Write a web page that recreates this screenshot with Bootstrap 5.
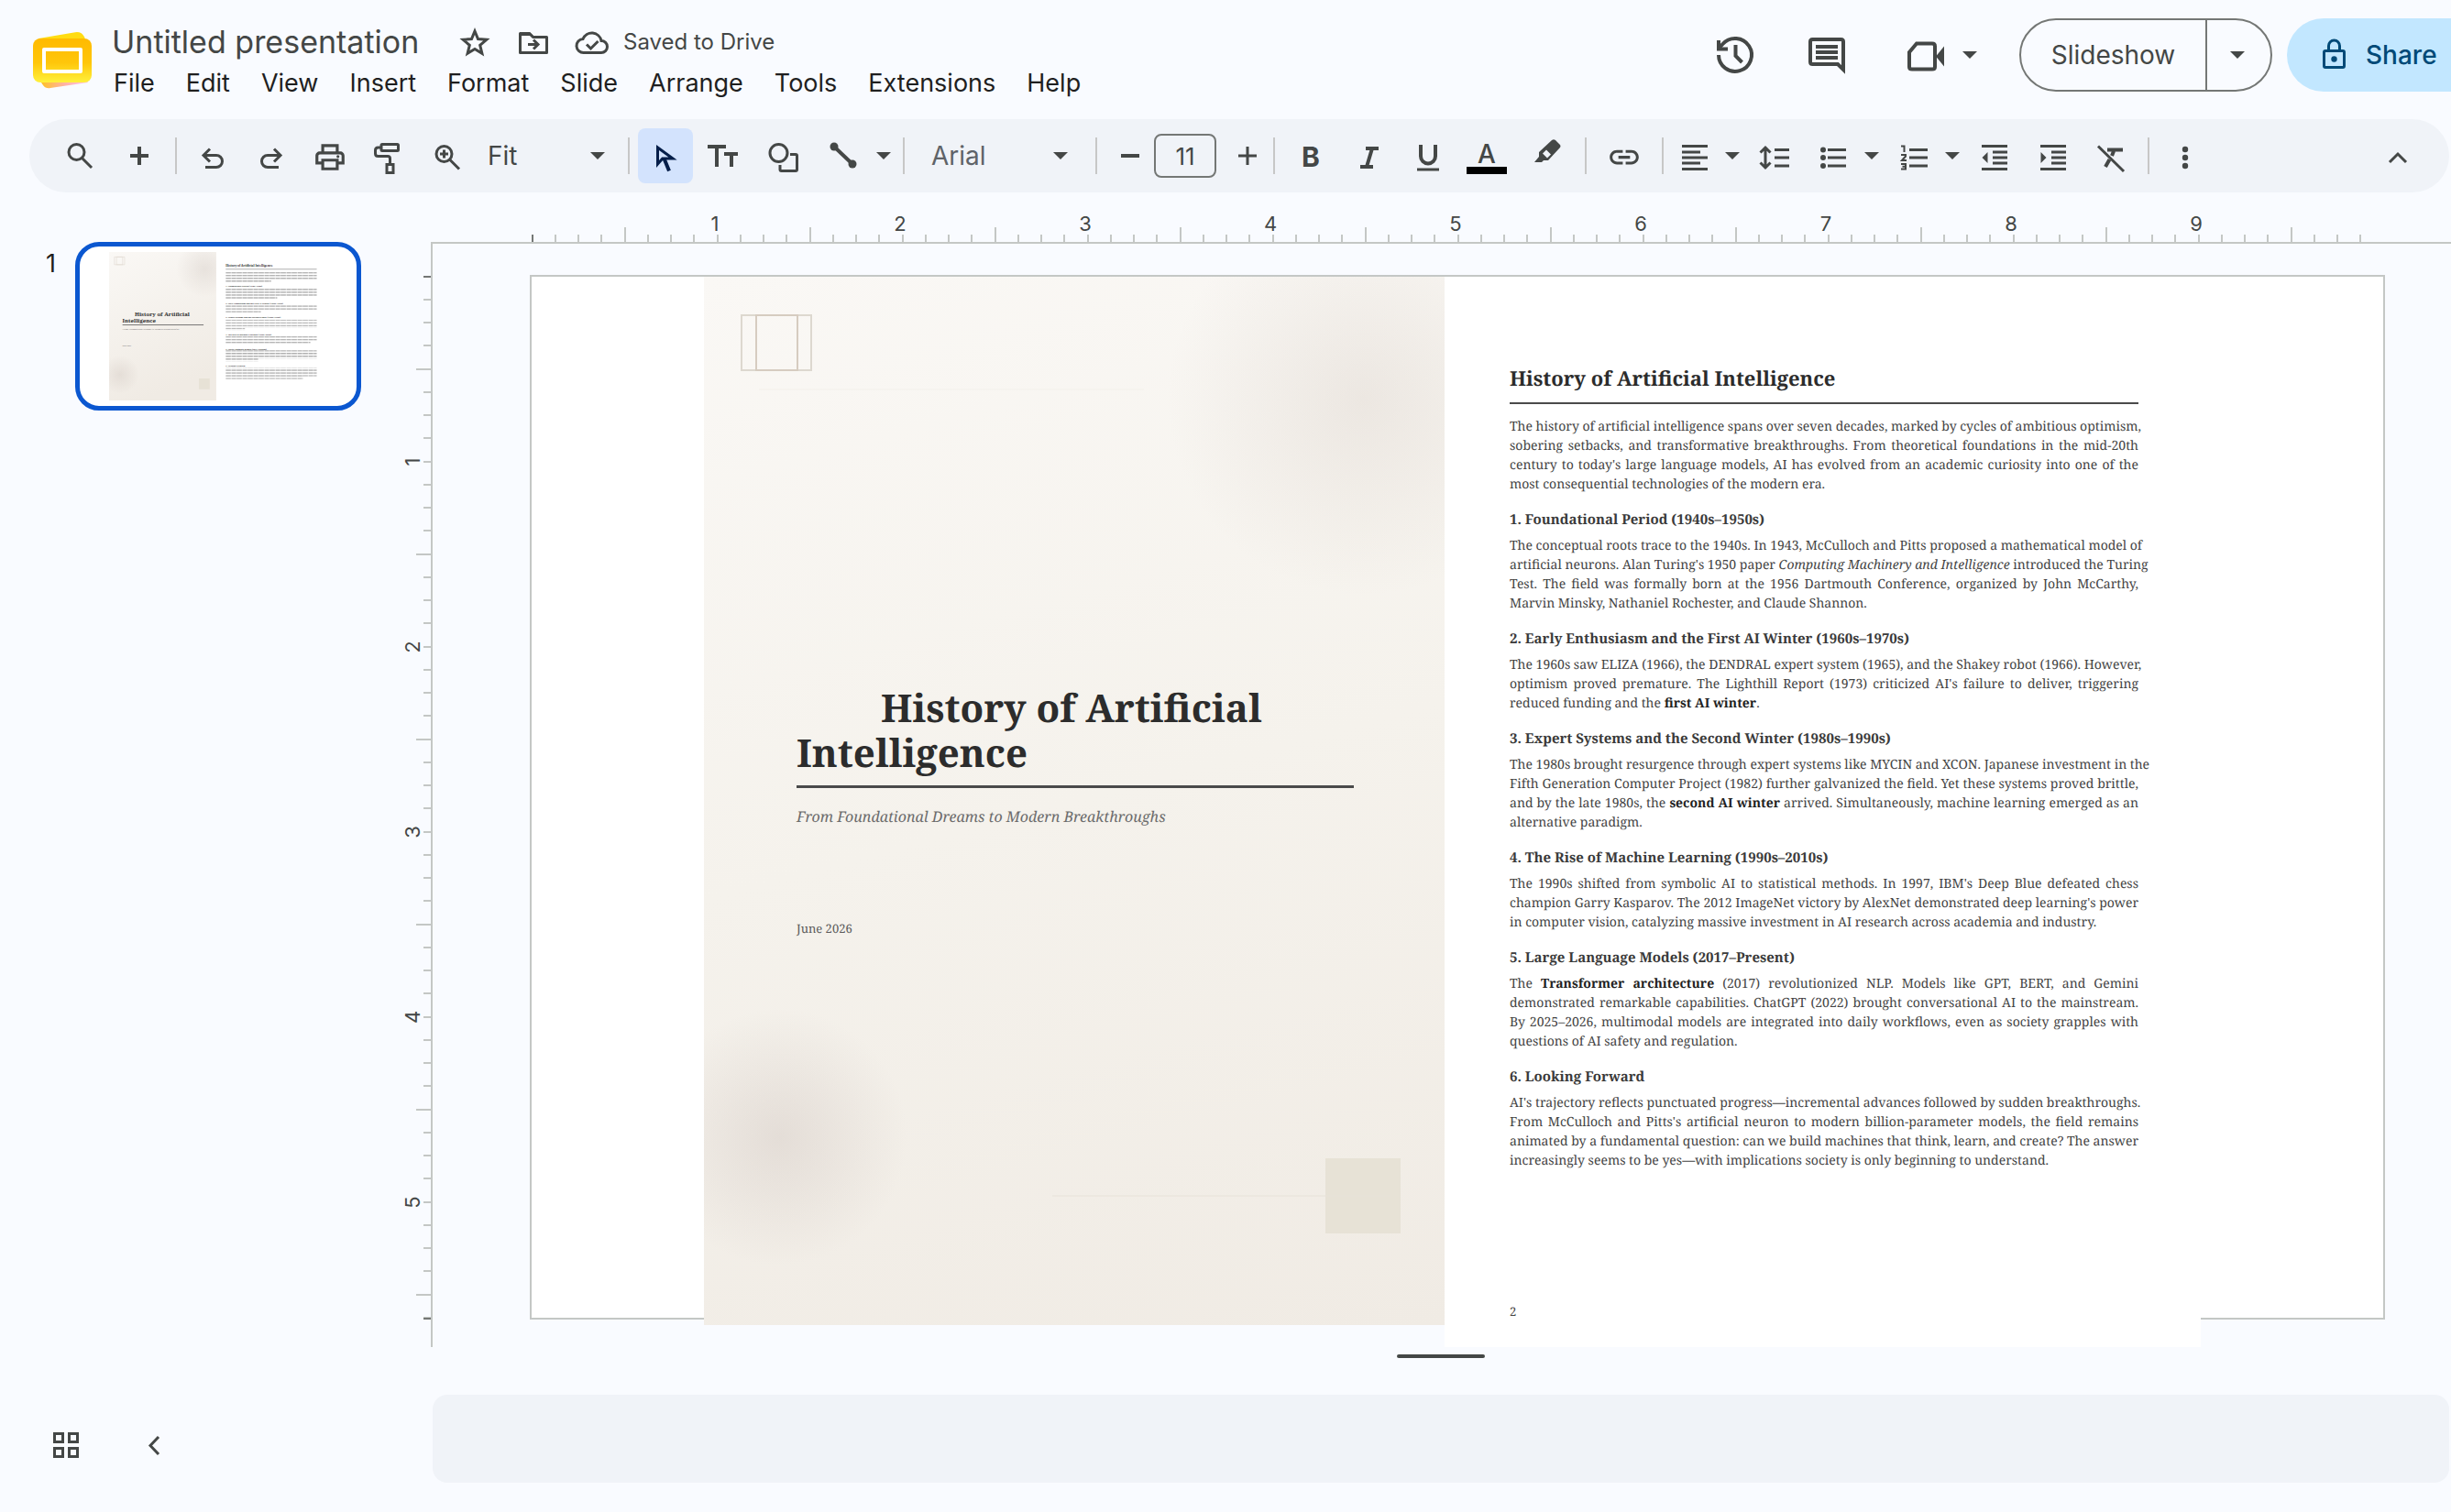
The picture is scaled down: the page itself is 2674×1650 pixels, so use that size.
<!DOCTYPE html>
<html lang="en">
<head>
<meta charset="utf-8">
<meta name="viewport" content="width=device-width, initial-scale=1">
<title>Untitled presentation</title>
<link href="https://cdn.jsdelivr.net/npm/bootstrap@5.3.0/dist/css/bootstrap.min.css" rel="stylesheet">
<style>
  :root { --ink: #444746; --bar: #f0f3f8; --rule: #c4c7c5; }
  body { background: #f9fbff; color: #1f1f1f; font-family: Inter, Roboto, sans-serif; overflow-x: hidden; }
  svg { display: block; flex: none; overflow: visible; }
  svg.line { fill: none; stroke: currentColor; stroke-width: 3; }
  svg.thick { stroke-width: 4; }
  button { border: 0; background: none; color: var(--ink); padding: 0; }
  .solid { fill: currentColor; stroke: none; }

  /* header */
  .top-bar { height: 130px; padding-left: 36px; }
  .app-logo { margin-top: 33px; }
  .doc-block { padding: 24px 0 0 22px; }
  .doc-name { width: 340px; height: 44px; font-size: 34px; line-height: 44px; color: var(--ink); border: 0; background: none; padding: 0; margin-right: 36px; }
  .save-state { font-size: 24px; line-height: 44px; color: var(--ink); margin-left: -10px; }
  .menu-row { gap: 34px; line-height: 44px; font-size: 27px; margin: 1px 0 0 2px; }
  .menu-row a { color: #1f1f1f; text-decoration: none; }
  .head-actions { padding-top: 20px; }
  .head-actions > * { height: 80px; }
  .head-btn { width: 100px; }
  .meet-btn { padding: 0 46px 0 34px; gap: 16px; }
  .pill { border: 2px solid #747775; border-radius: 40px; overflow: hidden; font-size: 28px; font-weight: 500; }
  .pill-main { width: 201px; }
  .pill-drop { width: 71px; border-left: 2px solid #747775; padding-right: 4px; }
  .share-btn { width: 179px; margin-left: 16px; padding-left: 36px; gap: 18px; border-radius: 40px 0 0 40px; background: #c2e7ff; color: #004a77; font-size: 28px; font-weight: 500; }

  /* toolbar */
  .tool-bar { height: 80px; margin: 0 2px 0 32px; padding: 0 24px; border-radius: 40px; background: var(--bar); color: var(--ink); }
  .tool { width: 64px; height: 60px; flex: none; display: flex; align-items: center; justify-content: center; }
  .tool.on { width: 60px; margin: 0 2px; border-radius: 8px; background: #d3e3fd; color: #041e49; }
  .split { width: 60px; }
  .narrow { width: 54px; }
  .drop { width: 28px; }
  .wide { width: 68px; }
  .stepper { width: 55px; }
  .sep { width: 16px; height: 40px; flex: none; background: linear-gradient(#c7c7c7, #c7c7c7) center / 2px 40px no-repeat; }
  .pick { height: 60px; border: 0; padding: 0 0 0 14px; font-size: 28px; color: var(--ink); background-color: transparent; background-size: 16px 8px; background-position: right 18px center;
    background-image: url("data:image/svg+xml,%3Csvg xmlns='http://www.w3.org/2000/svg' viewBox='0 0 16 8'%3E%3Cpath fill='%23444746' d='M0 0h16L8 8z'/%3E%3C/svg%3E"); }
  .pick-zoom { width: 158px; padding-left: 12px; }
  .pick-font { width: 194px; padding-left: 22px; background-position: right 23px center; color: #5f6368; }
  .size-box { width: 68px; height: 48px; border: 2px solid #747775; border-radius: 8px; background: none; text-align: center; font-size: 26px; color: var(--ink); padding: 0; }

  /* filmstrip */
  .work-row { margin-top: 16px; }
  .film { width: 440px; padding: 38px 0 0 50px; flex: none; font-size: 27px; }
  .film-num { width: 32px; line-height: 48px; }
  .thumb { width: 312px; height: 184px; border: 5px solid #0b57d0; border-radius: 26px; overflow: hidden; background: #fff; }

  /* rulers and canvas */
  .ruler { color: var(--ink); font-size: 22px; }
  .h-ruler { margin-left: 30px; height: 40px; border-bottom: 2px solid var(--rule); }
  .v-ruler { width: 32px; height: 1204px; border-right: 2px solid var(--rule); flex: none; }
  .stage { height: 1204px; padding: 34px 72px 0 106px; overflow: hidden; }
  .slide { height: 1140px; border: 2px solid var(--rule); background: #fff; padding-left: 188px; }
  .doc-page { font-family: "Noto Serif", "DejaVu Serif Condensed", serif; font-size: 14px; line-height: 21px; color: #444; flex: none; text-rendering: geometricPrecision; }
  .cover { width: 808px; height: 1144px; padding: 446px 99px 0 101px; position: relative;
    background:
      radial-gradient(circle 215px at 720px 133px, rgba(190,175,165,.2), rgba(190,175,165,0)),
      radial-gradient(circle 140px at 82px 939px, rgba(185,170,165,.26), rgba(185,170,165,0)),
      linear-gradient(165deg, #faf8f5, #f5f2ec 50%, #f0ebe4); }
  .cover-art { position: absolute; left: 0; top: 0; }
  .cover-title { font-size: 42px; line-height: 49px; font-weight: 700; color: #2c2c2c; text-indent: 92px; margin: 0; padding-bottom: 11px; border-bottom: 3px solid #4a4a4a; }
  .cover-sub { font-size: 16px; line-height: 26px; font-style: italic; color: #6b6b6b; margin: 18px 0 99px; }
  .cover-date { font-size: 13px; color: #5a5a5a; margin: 0; }
  .article { width: 825px; height: 1168px; padding: 94px 68px 30px 71px; background: #fff; }
  .article h1 { font-size: 22px; line-height: 34px; font-weight: 700; color: #2c2c2c; margin: 0 0 14px; padding-bottom: 9px; border-bottom: 2px solid #4a4a4a; }
  .article h2 { font-size: 15px; line-height: 22px; font-weight: 700; color: #3a3a3a; margin: 17px 0 7px; }
  .article p { margin: 0; }
  .article p span { display: block; white-space: nowrap; text-align: justify; text-align-last: justify; }
  .article p span:last-child { text-align-last: left; }
  .article strong { color: #222; }
  .folio { font-size: 13px; line-height: 18px; }

  /* notes */
  .grip { width: 96px; height: 4px; border-radius: 2px; background: var(--ink); margin: 8px auto 40px; }
  .notes { height: 96px; border: 0; border-radius: 16px; background: var(--bar); resize: none; }
  .foot-row { padding: 0 2px 32px 0; }
  .foot-tools { width: 472px; flex: none; padding-left: 24px; }
  .foot-tools button { width: 96px; height: 82px; }
</style>
<script src="https://cdn.jsdelivr.net/npm/bootstrap@5.3.0/dist/js/bootstrap.bundle.min.js"></script>
</head>
<body>

<header class="top-bar d-flex align-items-start">
  <svg class="app-logo" width="64" height="66" viewBox="0 0 64 66" aria-label="Slides">
    <defs>
      <linearGradient id="lgA" x1="0" y1="0" x2="0" y2="1"><stop offset="0" stop-color="#ffba00"/><stop offset=".55" stop-color="#ffc60a"/><stop offset="1" stop-color="#fff13c"/></linearGradient>
      <linearGradient id="lgB" x1="0" y1="0" x2="1" y2="0"><stop offset="0" stop-color="#ffc21a"/><stop offset=".5" stop-color="#ffb3a0"/><stop offset="1" stop-color="#ffc0ee"/></linearGradient>
    </defs>
    <path d="M6 9 46 2.200q7-1 10 5l2 5H6z" fill="#ffdc12"/>
    <path d="M7 54l4 6q3 4 8 3l41-6-3-6z" fill="url(#lgB)"/>
    <rect y="9" width="64" height="48" rx="8" fill="url(#lgA)"/>
    <rect x="12" y="21" width="40" height="24" fill="none" stroke="#fff" stroke-width="4" stroke-linejoin="round"/>
  </svg>
  <div class="doc-block">
    <div class="d-flex align-items-center">
      <input class="doc-name" type="text" value="Untitled presentation" aria-label="Rename">
      <div class="d-flex gap-4">
        <button aria-label="Star"><svg class="line" width="40" height="40" viewBox="0 0 40 40"><path d="M20 8l3.500 8.600 9.300.7-7.100 6 2.200 9-7.900-4.900-7.900 4.900 2.200-9-7.100-6 9.300-.7z"/></svg></button>
        <button aria-label="Move"><svg class="line" width="40" height="40" viewBox="0 0 40 40"><path d="M5.500 10.500h10l4 4h15v17h-29z" stroke-linejoin="round"/><path d="M5 9h11l4 4H5z" class="solid"/><path d="M14 22.500h10M20 17.500l5 5-5 5"/></svg></button>
        <button aria-label="Document status"><svg class="line" width="40" height="40" viewBox="0 0 40 40"><path d="M11 31.500a7.500 7.500 0 0 1-1-15 10.500 10.500 0 0 1 20 2 6.500 6.500 0 0 1 0 13z"/><path d="M14 22.500l4.500 4.500 8-8"/></svg></button>
        <span class="save-state">Saved to Drive</span>
      </div>
    </div>
    <nav class="menu-row d-flex">
      <a href="#">File</a><a href="#">Edit</a><a href="#">View</a><a href="#">Insert</a><a href="#">Format</a><a href="#">Slide</a><a href="#">Arrange</a><a href="#">Tools</a><a href="#">Extensions</a><a href="#">Help</a>
    </nav>
  </div>
  <div class="head-actions d-flex ms-auto">
    <button class="head-btn d-flex align-items-center justify-content-center" aria-label="Version history"><svg class="line thick" width="40" height="40" viewBox="0 0 40 40"><path d="M2 20a18 18 0 1 0 4.500-12L2 13"/><path d="M2 4v9.500h10M20.500 9v12l7 7"/></svg></button>
    <button class="head-btn d-flex align-items-center justify-content-center" aria-label="Comments"><svg class="line thick" width="40" height="40" viewBox="0 0 40 40"><path d="M2 5.500Q2 3 4.500 3h31Q38 3 38 5.500V36l-6-6H4.500Q2 30 2 27.500z"/><path d="M8 11h24M8 17h24M8 23h24"/></svg></button>
    <button class="meet-btn d-flex align-items-center" aria-label="Meet">
      <svg class="line thick" width="48" height="48" viewBox="0 0 48 48"><path d="M6 21l8-9.500h17q3 0 3 3V37q0 2.500-3 2.500H9Q6 39.500 6 37z"/><path class="solid" d="M35 25.500l9-11v22z"/></svg>
      <svg width="16" height="8" viewBox="0 0 16 8"><path class="solid" d="M0 0h16L8 8z"/></svg>
    </button>
    <div class="pill d-flex">
      <button class="pill-main">Slideshow</button>
      <button class="pill-drop d-flex align-items-center justify-content-center" aria-label="Slideshow options"><svg width="16" height="8" viewBox="0 0 16 8"><path class="solid" d="M0 0h16L8 8z"/></svg></button>
    </div>
    <button class="share-btn d-flex align-items-center">
      <svg width="32" height="36" viewBox="0 0 32 36" fill="none" stroke="currentColor" stroke-width="3"><rect x="4.500" y="13.500" width="22" height="18" rx="1.500"/><path d="M9.500 13V8a6 6 0 0 1 12 0v5"/><circle class="solid" cx="15.500" cy="22.500" r="3.200"/></svg>
      <span>Share</span>
    </button>
  </div>
</header>

<div class="tool-bar d-flex align-items-center" role="toolbar">
  <button class="tool" aria-label="Search the menus"><svg class="line" width="40" height="40"><circle cx="15.500" cy="16" r="8.500"/><path d="M21.500 22.500L32 33"/></svg></button>
  <button class="tool" aria-label="New slide"><svg class="line thick" width="40" height="40"><path d="M20 10v20M10 20h20"/></svg></button>
  <span class="sep"></span>
  <button class="tool" aria-label="Undo"><svg class="line" width="40" height="40"><path d="M17 12.500l-7 7 7 7M10 19.500h14a6.500 6.500 0 0 1 0 13H12"/></svg></button>
  <button class="tool" aria-label="Redo"><svg class="line" width="40" height="40"><path d="M23 12.500l7 7-7 7M30 19.500H16a6.500 6.500 0 0 0 0 13h12"/></svg></button>
  <button class="tool" aria-label="Print"><svg width="38" height="38" viewBox="0 -1 24 24"><path class="solid" fill-rule="evenodd" d="M19 8h-1V3H6v5H5c-1.660 0-3 1.340-3 3v6h4v4h12v-4h4v-6c0-1.660-1.340-3-3-3zM8 5h8v3H8V5zm8 12v2H8v-4h8v2zm2-2v-2H6v2H4v-4c0-.55.45-1 1-1h14c.55 0 1 .45 1 1v4h-2z"/><circle class="solid" cx="17.500" cy="11.500" r="1"/></svg></button>
  <button class="tool" aria-label="Paint format"><svg class="line" width="40" height="40"><rect x="12" y="7.500" width="18.500" height="7" rx="1"/><path d="M12 11H8.500Q5.500 11 5.500 14v3.500q0 3 3 3H19q2.500 0 2.500 2.500v6"/><rect x="18" y="29.500" width="7" height="9"/></svg></button>
  <button class="tool" aria-label="Zoom"><svg class="line" width="40" height="40"><circle cx="16.500" cy="18" r="8.500"/><path d="M22.500 24L33 34.500M16.500 13.500v9M12 18h9"/></svg></button>
  <select class="form-select pick pick-zoom" aria-label="Zoom level"><option>Fit</option><option>100%</option></select>
  <span class="sep"></span>
  <button class="tool on" aria-label="Select"><svg class="line" width="40" height="40"><path d="M11.500 11v18l5.300-6H28z"/><path d="M18.500 23L24 36.500" style="stroke-width:4"/></svg></button>
  <button class="tool" aria-label="Text box"><svg class="line thick" width="40" height="40"><path d="M2 10h20M12 10v22M20 18h15M28 18v14"/></svg></button>
  <button class="tool" aria-label="Shape"><svg class="line" width="40" height="40"><circle cx="15.500" cy="17" r="9.500"/><path d="M28 18.500h6q1.500 0 1.500 1.500v15q0 1.500-1.500 1.500H18.500q-1.500 0-1.500-1.500v-5"/></svg></button>
  <button class="tool" aria-label="Line"><svg class="line thick" width="40" height="40"><path d="M12 10l20 19"/><circle class="solid" cx="12" cy="10" r="4.500"/><circle class="solid" cx="32" cy="29" r="4.500"/></svg></button>
  <button class="tool drop" aria-label="Line options"><svg width="16" height="8" viewBox="0 0 16 8"><path class="solid" d="M0 0h16L8 8z"/></svg></button>
  <span class="sep"></span>
  <select class="form-select pick pick-font" aria-label="Font"><option>Arial</option><option>Georgia</option></select>
  <span class="sep"></span>
  <button class="tool stepper" aria-label="Decrease font size"><svg class="line thick" width="40" height="40"><path d="M11 20h20"/></svg></button>
  <input class="size-box" type="text" value="11" aria-label="Font size">
  <button class="tool stepper" aria-label="Increase font size"><svg class="line" width="40" height="40"><path d="M16 20h20M26 10v20"/></svg></button>
  <span class="sep"></span>
  <button class="tool" aria-label="Bold"><svg width="40" height="40"><text x="20" y="32" text-anchor="middle" font-size="30" font-weight="700" fill="currentColor">B</text></svg></button>
  <button class="tool" aria-label="Italic"><svg class="line thick" width="40" height="40"><path d="M16 12h14M10 32h14M23 12l-6 20"/></svg></button>
  <button class="tool" aria-label="Underline"><svg class="line" width="40" height="40"><path d="M12 8v12.500a8 8 0 0 0 16 0V8" style="stroke-width:4"/><path d="M8 35h24"/></svg></button>
  <button class="tool" aria-label="Text color"><svg width="40" height="40"><text x="20" y="28" text-anchor="middle" font-size="28" font-weight="500" fill="currentColor">A</text><path d="M-2 32h44v8H-2z" fill="#000"/></svg></button>
  <button class="tool wide" aria-label="Highlight color"><svg width="40" height="40"><path class="solid" fill-rule="evenodd" d="M6 27l5-6v-5L25 3q2-1.500 4 0l4.500 4.500q2 2 0 4L21 25h-5l-2 2zM15 17.500L20 22.500l4-4L19 13.500z"/></svg></button>
  <span class="sep"></span>
  <button class="tool wide" aria-label="Insert link"><svg width="38" height="38" viewBox="0 -1 24 24"><path class="solid" d="M3.900 12c0-1.710 1.390-3.100 3.100-3.100h4V7H7c-2.760 0-5 2.240-5 5s2.240 5 5 5h4v-1.900H7c-1.710 0-3.100-1.390-3.100-3.100zM8 13h8v-2H8v2zm9-6h-4v1.900h4c1.710 0 3.100 1.390 3.100 3.100s-1.390 3.100-3.100 3.100h-4V17h4c2.760 0 5-2.240 5-5s-2.240-5-5-5z"/></svg></button>
  <span class="sep"></span>
  <button class="tool narrow" aria-label="Align"><svg class="line" width="40" height="40"><path d="M6 9.500h28M6 16h20M6 22h28M6 28h20M6 34.500h28"/></svg></button>
  <button class="tool drop" aria-label="Align options"><svg width="16" height="8" viewBox="0 0 16 8"><path class="solid" d="M0 0h16L8 8z"/></svg></button>
  <button class="tool" aria-label="Line spacing"><svg class="line" width="40" height="40"><path d="M20 13.500h16M20 22h16M20 31h16M10 12v20M4.500 16.500l5.500-5.500 5.500 5.500M4.500 27.500L10 33l5.500-5.500"/></svg></button>
  <button class="tool split" aria-label="Bulleted list"><svg class="line" width="40" height="40"><path d="M16 13.500h20M16 22h20M16 31h20"/><g class="solid"><circle cx="11" cy="13.500" r="3"/><circle cx="11" cy="22" r="3"/><circle cx="11" cy="31" r="3"/></g></svg></button>
  <button class="tool drop" aria-label="Bulleted list options"><svg width="16" height="8" viewBox="0 0 16 8"><path class="solid" d="M0 0h16L8 8z"/></svg></button>
  <button class="tool split" aria-label="Numbered list"><svg class="line" width="40" height="40"><path d="M17 13.500h20M17 22h20M17 31h20"/><path d="M8 9.500h3.500V16M8 19h5v1.500L9 25h5M8 29h5v5.500H8M9.500 31.700H13" style="stroke-width:2"/></svg></button>
  <button class="tool drop" aria-label="Numbered list options"><svg width="16" height="8" viewBox="0 0 16 8"><path class="solid" d="M0 0h16L8 8z"/></svg></button>
  <button class="tool" aria-label="Decrease indent"><svg class="line" width="40" height="40"><path d="M6 9.500h28M18 16h16M18 22h16M18 28h16M6 34.500h28"/><path class="solid" d="M12.500 16v12L6.500 22z"/></svg></button>
  <button class="tool" aria-label="Increase indent"><svg class="line" width="40" height="40"><path d="M6 9.500h28M18 16h16M18 22h16M18 28h16M6 34.500h28"/><path class="solid" d="M6.500 16v12l6-6z"/></svg></button>
  <button class="tool" aria-label="Clear formatting"><svg class="line" width="40" height="40"><path d="M5 9.500L33 37"/><path d="M15 13.500h17M22 15l-2 5M17.500 24L13 32" style="stroke-width:4"/></svg></button>
  <span class="sep"></span>
  <button class="tool" aria-label="More"><svg width="40" height="40"><g class="solid"><circle cx="20" cy="13" r="3.200"/><circle cx="20" cy="22" r="3.200"/><circle cx="20" cy="31" r="3.200"/></g></svg></button>
  <button class="tool ms-auto" aria-label="Hide the menus"><svg class="line" width="40" height="40"><path d="M11 27l9-9 9 9"/></svg></button>
</div>

<main class="work-row d-flex">
  <aside class="film d-flex align-items-start">
    <span class="film-num">1</span>
    <div class="thumb">
      <svg width="302" height="174" viewBox="0 0 2086 1202" font-family="Noto Serif, serif" aria-label="Slide 1">
        <defs>
          <linearGradient id="pg" x1="0" y1="0" x2=".3" y2="1"><stop offset="0" stop-color="#faf8f5"/><stop offset="1" stop-color="#f0ebe4"/></linearGradient>
          <radialGradient id="bl"><stop offset="0" stop-color="#bdb0a8" stop-opacity=".26"/><stop offset="1" stop-color="#bdb0a8" stop-opacity="0"/></radialGradient>
          <pattern id="ln" width="83" height="21" patternUnits="userSpaceOnUse"><path d="M0 10h38M42 10h38" stroke="#444" stroke-width="10" opacity=".42"/></pattern>
          <clipPath id="cp"><path d="M0 0h808v1120H0z"/></clipPath>
        </defs>
        <g transform="translate(221 41)">
          <g clip-path="url(#cp)"><path d="M0 0h808v1120H0z" fill="url(#pg)"/><circle cx="720" cy="125" r="215" fill="url(#bl)"/><circle cx="82" cy="925" r="145" fill="url(#bl)"/>
          <path d="M40 38h77v58H40zM56 38h46v58H56z" fill="none" stroke="#e0d9d0" stroke-width="4"/><path d="M677 953h82v82h-82z" fill="#e7e2d6"/></g>
          <g fill="#2c2c2c" font-weight="700" font-size="42"><text x="193" y="482">History of Artificial</text><text x="101" y="531">Intelligence</text></g>
          <path d="M101 550h611" stroke="#4a4a4a" stroke-width="5"/>
          <text x="101" y="588" font-size="17" font-style="italic" fill="#6b6b6b">From Foundational Dreams to Modern Breakthroughs</text>
          <text x="101" y="709" font-size="14" fill="#5a5a5a">June 2026</text>
          <g transform="translate(879 0)" fill="#2c2c2c" font-weight="700" font-size="15">
            <text y="111" font-size="22">History of Artificial Intelligence</text><path d="M0 130h686" stroke="#777" stroke-width="4"/>
            <g fill="url(#ln)"><path d="M0 147h686v63H0zM0 210h342v21H0z"/><path d="M0 273h686v63H0zM0 336h388v21H0z"/><path d="M0 399h686v42H0zM0 441h265v21H0z"/><path d="M0 510h686v63H0zM0 573h145v21H0z"/><path d="M0 636h686v42H0zM0 678h638v21H0z"/><path d="M0 741h686v63H0zM0 804h246v21H0z"/><path d="M0 875h686v63H0zM0 938h582v21H0z"/></g>
            <text y="262">1. Foundational Period (1940s–1950s)</text><text y="392">2. Early Enthusiasm and the First AI Winter (1960s–1970s)</text><text y="501">3. Expert Systems and the Second Winter (1980s–1990s)</text><text y="630">4. The Rise of Machine Learning (1990s–2010s)</text><text y="738">5. Large Language Models (2017–Present)</text><text y="866">6. Looking Forward</text>
          </g>
        </g>
      </svg>
    </div>
  </aside>

  <section class="flex-grow-1">
    <div class="ruler h-ruler">
      <svg width="100%" height="38">
        <defs><pattern id="hr" x="110" width="202" height="38" patternUnits="userSpaceOnUse"><path d="M1 30v8M26 30v8M51 30v8M76 30v8M102 22v16M127 30v8M152 30v8M177 30v8" stroke="#c4c7c5" stroke-width="2" shape-rendering="crispEdges"/></pattern></defs>
        <rect x="110" width="1998" height="38" fill="url(#hr)"/>
        <path d="M111 30v8" stroke="#747775" stroke-width="2"/>
        <g text-anchor="middle" fill="currentColor"><text x="310" y="26">1</text><text x="512" y="26">2</text><text x="714" y="26">3</text><text x="916" y="26">4</text><text x="1118" y="26">5</text><text x="1320" y="26">6</text><text x="1522" y="26">7</text><text x="1724" y="26">8</text><text x="1926" y="26">9</text></g>
      </svg>
    </div>
    <div class="d-flex">
      <div class="ruler v-ruler">
        <svg width="30" height="1204">
          <defs><pattern id="vr" y="35" width="30" height="202" patternUnits="userSpaceOnUse"><path d="M22 1h8M22 26h8M22 51h8M22 76h8M14 102h16M22 127h8M22 152h8M22 177h8" stroke="#c4c7c5" stroke-width="2" shape-rendering="crispEdges"/></pattern></defs>
          <rect y="35" width="30" height="1138" fill="url(#vr)"/>
          <path d="M22 36h8M22 1173h8" stroke="#747775" stroke-width="2"/>
          <g text-anchor="middle" fill="currentColor"><text transform="translate(18 238) rotate(-90)">1</text><text transform="translate(18 440) rotate(-90)">2</text><text transform="translate(18 642) rotate(-90)">3</text><text transform="translate(18 844) rotate(-90)">4</text><text transform="translate(18 1046) rotate(-90)">5</text></g>
        </svg>
      </div>
      <div class="stage flex-grow-1">
        <div class="slide d-flex align-items-start">
          <article class="doc-page cover">
            <svg class="cover-art" width="808" height="1144"><g fill="none" stroke-width="2"><path d="M41 42h76v60H41z" stroke="#ddd8cf"/><path d="M57 42h45v60H57z" stroke="#d6ccc0"/></g><path d="M60 123h420" stroke="#f3f0eb"/><path d="M678 962h82v82h-82z" fill="#e7e2d6"/><path d="M380 1003h369" stroke="#e7e2d8"/></svg>
            <h1 class="cover-title">History of Artificial Intelligence</h1>
            <p class="cover-sub">From Foundational Dreams to Modern Breakthroughs</p>
            <p class="cover-date">June 2026</p>
          </article>
          <article class="doc-page article d-flex flex-column">
            <h1>History of Artificial Intelligence</h1>
            <p><span>The history of artificial intelligence spans over seven decades, marked by cycles of ambitious optimism,</span>
              <span>sobering setbacks, and transformative breakthroughs. From theoretical foundations in the mid-20th</span>
              <span>century to today's large language models, AI has evolved from an academic curiosity into one of the</span>
              <span>most consequential technologies of the modern era.</span></p>
            <h2>1. Foundational Period (1940s–1950s)</h2>
            <p><span>The conceptual roots trace to the 1940s. In 1943, McCulloch and Pitts proposed a mathematical model of</span>
              <span>artificial neurons. Alan Turing's 1950 paper <em>Computing Machinery and Intelligence</em> introduced the Turing</span>
              <span>Test. The field was formally born at the 1956 Dartmouth Conference, organized by John McCarthy,</span>
              <span>Marvin Minsky, Nathaniel Rochester, and Claude Shannon.</span></p>
            <h2>2. Early Enthusiasm and the First AI Winter (1960s–1970s)</h2>
            <p><span>The 1960s saw ELIZA (1966), the DENDRAL expert system (1965), and the Shakey robot (1966). However,</span>
              <span>optimism proved premature. The Lighthill Report (1973) criticized AI's failure to deliver, triggering</span>
              <span>reduced funding and the <strong>first AI winter</strong>.</span></p>
            <h2>3. Expert Systems and the Second Winter (1980s–1990s)</h2>
            <p><span>The 1980s brought resurgence through expert systems like MYCIN and XCON. Japanese investment in the</span>
              <span>Fifth Generation Computer Project (1982) further galvanized the field. Yet these systems proved brittle,</span>
              <span>and by the late 1980s, the <strong>second AI winter</strong> arrived. Simultaneously, machine learning emerged as an</span>
              <span>alternative paradigm.</span></p>
            <h2>4. The Rise of Machine Learning (1990s–2010s)</h2>
            <p><span>The 1990s shifted from symbolic AI to statistical methods. In 1997, IBM's Deep Blue defeated chess</span>
              <span>champion Garry Kasparov. The 2012 ImageNet victory by AlexNet demonstrated deep learning's power</span>
              <span>in computer vision, catalyzing massive investment in AI research across academia and industry.</span></p>
            <h2>5. Large Language Models (2017–Present)</h2>
            <p><span>The <strong>Transformer architecture</strong> (2017) revolutionized NLP. Models like GPT, BERT, and Gemini</span>
              <span>demonstrated remarkable capabilities. ChatGPT (2022) brought conversational AI to the mainstream.</span>
              <span>By 2025–2026, multimodal models are integrated into daily workflows, even as society grapples with</span>
              <span>questions of AI safety and regulation.</span></p>
            <h2>6. Looking Forward</h2>
            <p><span>AI's trajectory reflects punctuated progress—incremental advances followed by sudden breakthroughs.</span>
              <span>From McCulloch and Pitts's artificial neuron to modern billion-parameter models, the field remains</span>
              <span>animated by a fundamental question: can we build machines that think, learn, and create? The answer</span>
              <span>increasingly seems to be yes—with implications society is only beginning to understand.</span></p>
            <div class="folio mt-auto">2</div>
          </article>
        </div>
      </div>
    </div>
  </section>
</main>

<footer class="foot-row d-flex align-items-end">
  <div class="foot-tools d-flex">
    <button class="d-flex align-items-center justify-content-center" aria-label="Grid view"><svg width="28" height="28" viewBox="0 0 28 28" fill="none" stroke="currentColor" stroke-width="3"><path d="M1.500 1.500h9v9h-9zM17.500 1.500h9v9h-9zM1.500 17.500h9v9h-9zM17.500 17.500h9v9h-9z"/></svg></button>
    <button class="d-flex align-items-center justify-content-center" aria-label="Hide filmstrip"><svg class="line" width="40" height="40"><path d="M25 11l-9 9.500 9 9.500"/></svg></button>
  </div>
  <div class="flex-grow-1">
    <div class="grip"></div>
    <textarea class="notes d-block w-100" aria-label="Speaker notes"></textarea>
  </div>
</footer>
</body>
</html>
